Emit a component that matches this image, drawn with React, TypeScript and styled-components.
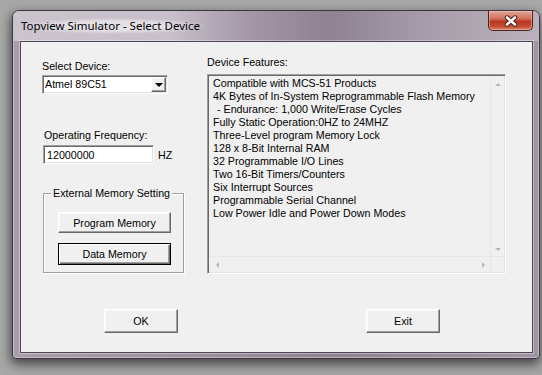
import styled, { createGlobalStyle, css } from "styled-components";

const GlobalStyle = createGlobalStyle`
  html, body {
    margin: 0;
    padding: 0;
  }
  body {
    width: 542px;
    height: 375px;
    overflow: hidden;
    background: #a7a7a7;
    font-family: "Liberation Sans", Arial, sans-serif;
  }
`;

const FONT_SIZE = "10.7px";

const sunken = css`
  border: 1px solid;
  border-color: #a0a0a0 #ffffff #ffffff #a0a0a0;
  box-shadow: inset 1px 1px 0 #696969, inset -1px -1px 0 #e3e3e3;
`;

const raised = css`
  border: 1px solid;
  border-color: #ffffff #696969 #696969 #ffffff;
  box-shadow: inset -1px -1px 0 #a0a0a0, inset 1px 1px 0 #f8f8f8;
`;

const features: { text: string; indent?: boolean }[] = [
  { text: "Compatible with MCS-51 Products" },
  { text: "4K Bytes of In-System Reprogrammable Flash Memory" },
  { text: "- Endurance: 1,000 Write/Erase Cycles", indent: true },
  { text: "Fully Static Operation:0HZ to 24MHZ" },
  { text: "Three-Level program Memory Lock" },
  { text: "128 x 8-Bit Internal RAM" },
  { text: "32 Programmable I/O Lines" },
  { text: "Two 16-Bit Timers/Counters" },
  { text: "Six Interrupt Sources" },
  { text: "Programmable Serial Channel" },
  { text: "Low Power Idle and Power Down Modes" },
];

export default function App() {
  return (
    <>
      <GlobalStyle />
      <Window>
        <TitleBar>
          <Title>Topview Simulator - Select Device</Title>
          <CloseButton aria-label="Close">
            <svg width="16" height="12" viewBox="0 0 16 12">
              <path d="M4 2.5 L12 9.5 M12 2.5 L4 9.5" stroke="#4a1a12" strokeWidth="4.4" strokeLinecap="round" />
              <path d="M4 2.5 L12 9.5 M12 2.5 L4 9.5" stroke="#ffffff" strokeWidth="2.6" strokeLinecap="round" />
            </svg>
          </CloseButton>
        </TitleBar>
        <Client>
          <Main>
            <LeftColumn>
              <Label $top={18} $bottom={2}>Select Device:</Label>
              <Combo>
                <ComboValue>Atmel 89C51</ComboValue>
                <DropButton>
                  <Arrow $dir="down" $color="#000" $size={4} />
                </DropButton>
              </Combo>
              <Label $top={35} $bottom={3} $left={2}>Operating Frequency:</Label>
              <FreqRow>
                <TextBox>12000000</TextBox>
                <Unit>HZ</Unit>
              </FreqRow>
              <Group>
                <Legend>External Memory Setting</Legend>
                <Button $width={113} $height={21}>Program Memory</Button>
                <Button $width={113} $height={22} $default>Data Memory</Button>
              </Group>
            </LeftColumn>
            <RightColumn>
              <Label $top={14} $bottom={5}>Device Features:</Label>
              <ListBox>
                <Items>
                  {features.map((f) => (
                    <Item key={f.text} $indent={f.indent}>
                      {f.text}
                    </Item>
                  ))}
                </Items>
                <VScroll>
                  <ScrollArrowBox>
                    <Arrow $dir="up" $color="#b4b4b4" $size={3} />
                  </ScrollArrowBox>
                  <ScrollArrowBox>
                    <Arrow $dir="down" $color="#b4b4b4" $size={3} />
                  </ScrollArrowBox>
                </VScroll>
                <HScroll>
                  <ScrollArrowBox>
                    <Arrow $dir="left" $color="#b4b4b4" $size={3} />
                  </ScrollArrowBox>
                  <ScrollArrowBox>
                    <Arrow $dir="right" $color="#b4b4b4" $size={3} />
                  </ScrollArrowBox>
                </HScroll>
                <Corner />
              </ListBox>
            </RightColumn>
          </Main>
          <Footer>
            <Button $width={74} $height={24}>OK</Button>
            <Button $width={74} $height={24}>Exit</Button>
          </Footer>
        </Client>
      </Window>
    </>
  );
}

const Window = styled.div`
  box-sizing: border-box;
  display: flex;
  flex-direction: column;
  width: 528px;
  height: 349px;
  margin: 10px 0 0 12px;
  padding: 0 6px 5px 7px;
  border: 1px solid #3d3541;
  border-radius: 7px 7px 4px 4px;
  background: linear-gradient(90deg, #a89dab 0%, #9a8e9d 40%, #8f8393 60%, #9f94a2 100%);
  box-shadow: 0 6px 12px rgba(0, 0, 0, 0.45), -2px 2px 8px rgba(0, 0, 0, 0.25),
    inset 0 0 0 1px rgba(255, 255, 255, 0.35);
`;

const TitleBar = styled.div`
  display: flex;
  justify-content: space-between;
  align-items: flex-start;
  height: 30px;
  margin: 0 -6px 0 -7px;
  padding-left: 8px;
  border-radius: 6px 6px 0 0;
  background: linear-gradient(
    90deg,
    #cbc4cd 0%,
    #c7bfc9 30%,
    #a397a6 45%,
    #8e8292 60%,
    #a89eab 80%,
    #bab1bc 100%
  );
`;

const Title = styled.div`
  margin-top: 7px;
  padding: 0 6px 0 0;
  font-family: "Noto Sans", "Open Sans", sans-serif;
  font-size: 11.5px;
  line-height: 16px;
  color: #000;
  background: radial-gradient(ellipse at center, rgba(235, 232, 236, 0.8) 40%, rgba(235, 232, 236, 0) 72%);
`;

const CloseButton = styled.div`
  box-sizing: border-box;
  display: flex;
  align-items: center;
  justify-content: center;
  width: 45px;
  height: 20px;
  margin-right: 6px;
  border: 1px solid #4b231d;
  border-top: none;
  border-radius: 0 0 5px 5px;
  background: linear-gradient(#e2a597 0%, #d0705c 40%, #b9361f 55%, #c34a32 80%, #d9826a 100%);
  box-shadow: inset 0 0 0 1px rgba(255, 210, 200, 0.45);
`;

const Client = styled.div`
  flex: 1;
  display: flex;
  flex-direction: column;
  background: #f0f0f0;
  border: 1px solid #4f4554;
  box-shadow: 0 0 0 1px rgba(255, 255, 255, 0.35);
`;

const Main = styled.div`
  display: flex;
`;

const LeftColumn = styled.div`
  box-sizing: border-box;
  width: 186px;
  padding-left: 21px;
  display: flex;
  flex-direction: column;
  align-items: flex-start;
`;

const RightColumn = styled.div`
  display: flex;
  flex-direction: column;
  align-items: flex-start;
`;

const Label = styled.div<{ $top: number; $bottom: number; $left?: number }>`
  margin: ${(p) => p.$top}px 0 ${(p) => p.$bottom}px ${(p) => p.$left ?? 0}px;
  font-size: ${FONT_SIZE};
  line-height: 13px;
  color: #000;
`;

const Combo = styled.div`
  box-sizing: border-box;
  display: flex;
  align-items: center;
  width: 126px;
  height: 19px;
  background: #fff;
  ${sunken};
  padding: 1px 1px 1px 2px;
`;

const ComboValue = styled.div`
  flex: 1;
  font-size: ${FONT_SIZE};
  line-height: 13px;
  color: #000;
`;

const DropButton = styled.div`
  box-sizing: border-box;
  display: flex;
  align-items: center;
  justify-content: center;
  width: 15px;
  height: 15px;
  background: #f0f0f0;
  ${raised};
`;

const Arrow = styled.div<{ $dir: "up" | "down" | "left" | "right"; $color: string; $size: number }>`
  width: 0;
  height: 0;
  ${(p) =>
    p.$dir === "down"
      ? css`
          border-left: ${p.$size}px solid transparent;
          border-right: ${p.$size}px solid transparent;
          border-top: ${p.$size}px solid ${p.$color};
        `
      : p.$dir === "up"
      ? css`
          border-left: ${p.$size}px solid transparent;
          border-right: ${p.$size}px solid transparent;
          border-bottom: ${p.$size}px solid ${p.$color};
        `
      : p.$dir === "left"
      ? css`
          border-top: ${p.$size}px solid transparent;
          border-bottom: ${p.$size}px solid transparent;
          border-right: ${p.$size}px solid ${p.$color};
        `
      : css`
          border-top: ${p.$size}px solid transparent;
          border-bottom: ${p.$size}px solid transparent;
          border-left: ${p.$size}px solid ${p.$color};
        `}
`;

const FreqRow = styled.div`
  display: flex;
  align-items: center;
  gap: 4px;
  margin-left: 1px;
`;

const TextBox = styled.div`
  box-sizing: border-box;
  width: 111px;
  height: 19px;
  padding: 3px 3px 0;
  background: #fff;
  ${sunken};
  font-size: ${FONT_SIZE};
  line-height: 13px;
  color: #000;
`;

const Unit = styled.span`
  font-size: ${FONT_SIZE};
  color: #000;
`;

const Group = styled.fieldset`
  box-sizing: border-box;
  display: flex;
  flex-direction: column;
  gap: 10px;
  width: 141px;
  min-width: 0;
  margin: 23px 0 0 1px;
  padding: 12px 0 7px 14px;
  border: 1px solid #a0a0a0;
  box-shadow: 1px 1px 0 #fff, inset 1px 1px 0 #fff;
`;

const Legend = styled.legend`
  margin-left: -7px;
  padding: 0 2px;
  background: #f0f0f0;
  font-size: ${FONT_SIZE};
  line-height: 13px;
  white-space: nowrap;
  color: #000;
`;

const Button = styled.button<{ $width: number; $height: number; $default?: boolean }>`
  box-sizing: border-box;
  width: ${(p) => p.$width}px;
  height: ${(p) => p.$height}px;
  padding: 0;
  background: #f0f0f0;
  font-family: "Liberation Sans", Arial, sans-serif;
  font-size: ${FONT_SIZE};
  color: #000;
  ${raised};
  ${(p) =>
    p.$default &&
    css`
      border: 1px solid #000;
      box-shadow: inset 1px 1px 0 #fff, inset -1px -1px 0 #696969, inset -2px -2px 0 #a0a0a0;
    `}
`;

const ListBox = styled.div`
  box-sizing: border-box;
  display: grid;
  grid-template-columns: 1fr 14px;
  grid-template-rows: 1fr 16px;
  width: 299px;
  height: 200px;
  background: #f0f0f0;
  ${sunken};
  padding: 2px 1px 1px 2px;
`;

const Items = styled.div`
  padding: 0 0 0 3px;
`;

const Item = styled.div<{ $indent?: boolean }>`
  padding-left: ${(p) => (p.$indent ? 4 : 0)}px;
  font-size: ${FONT_SIZE};
  line-height: 13px;
  color: #000;
  white-space: nowrap;
`;

const VScroll = styled.div`
  display: flex;
  flex-direction: column;
  justify-content: space-between;
  border-left: 1px solid #e6e6e6;
`;

const HScroll = styled.div`
  display: flex;
  justify-content: space-between;
  align-items: center;
  border-top: 1px solid #e6e6e6;
`;

const ScrollArrowBox = styled.div`
  display: flex;
  align-items: center;
  justify-content: center;
  width: 14px;
  height: 14px;
`;

const Corner = styled.div`
  background: #f0f0f0;
  border-top: 1px solid #e6e6e6;
  border-left: 1px solid #e6e6e6;
`;

const Footer = styled.div`
  display: flex;
  gap: 188px;
  margin-top: 35px;
  padding-left: 83px;
`;
